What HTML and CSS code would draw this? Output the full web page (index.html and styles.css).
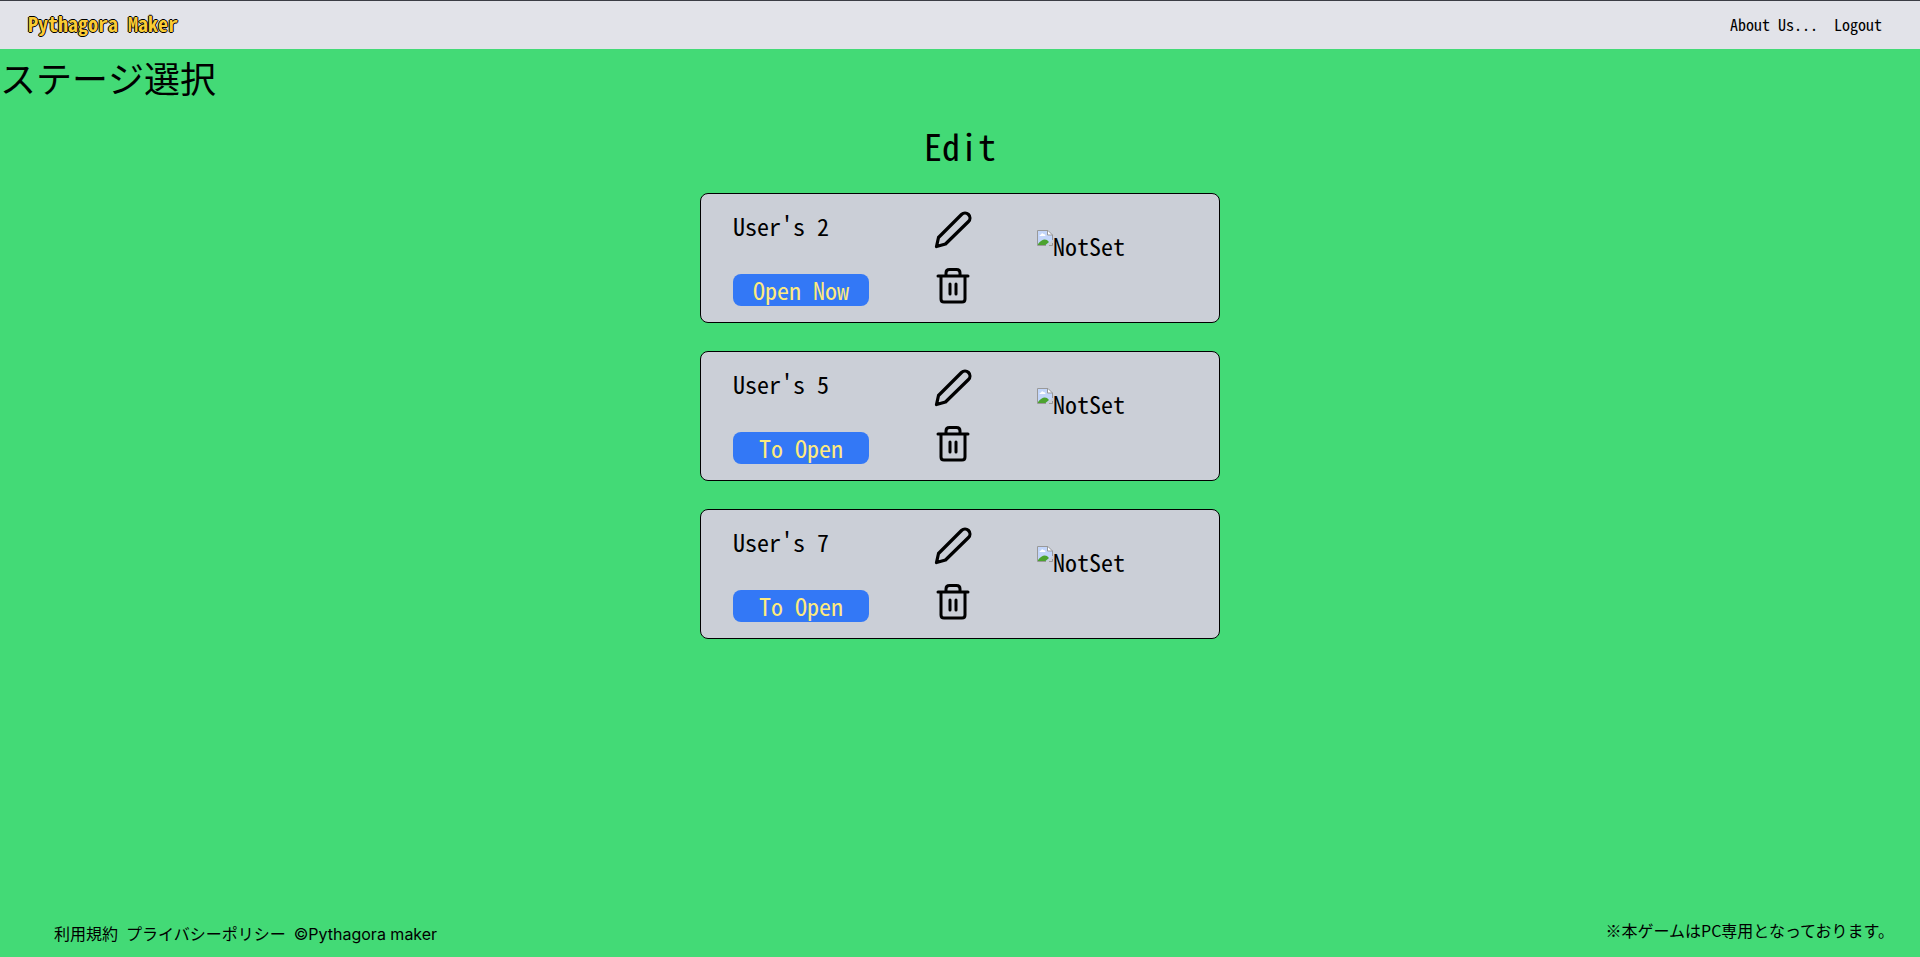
FILE: index.html
```html
<!DOCTYPE html>
<html lang="ja">
<head>
<meta charset="utf-8">
<title>Pythagora Maker</title>
<link rel="stylesheet" href="styles.css">
</head>
<body>
<svg class="sprite" aria-hidden="true">
  <symbol id="pencil" viewBox="0 0 48 48"><path d="M7.500 40.500 L9.500 31.500 L32.500 8.500 A4.900 4.900 0 0 1 39.500 15.500 L16.500 38 Z" fill="none" stroke="currentColor" stroke-width="3.200" stroke-linejoin="round"/></symbol>
  <symbol id="trash" viewBox="0 0 48 48"><path d="M9 14H39M12 14V37Q12 40 15 40H33Q36 40 36 37V14M17 14V11Q17 7.500 20.500 7.500H27.500Q31 7.500 31 11V14M21 22V32M27 22V32" fill="none" stroke="currentColor" stroke-width="3" stroke-linecap="round"/></symbol>
  <symbol id="missing" viewBox="0 0 16 16"><path d="M.5.500H11L15.500 5V10L9 15.500H.5Z" fill="#c3d6fa"/><path d="M1 15.500V14Q5.500 8 10 10L12 12L8 15.500Z" fill="#4ca32f"/><path d="M2.500 6Q2.500 4.500 4 4.500Q5 2.500 6.500 4Q8.500 4 8.500 6Z" fill="#fff"/><path d="M10.500.500V5H15.500Z" fill="#fff"/><path d="M15.500 10V5L11 .5H.5V15.500H9M10.500.500V5H15.500M12 15.500H15.500V13" fill="none" stroke="#999"/></symbol>
</svg>
<header class="topbar">
  <a class="logo" href="#">Pythagora Maker</a>
  <nav class="links"><a href="#">About Us...</a><a href="#">Logout</a></nav>
</header>
<main class="main">
  <h1 class="title">ステージ選択</h1>
  <h2 class="subtitle">Edit</h2>
  <div class="stages">
    <article class="card">
      <div class="info"><h3 class="name">User's 2</h3><button class="toggle">Open Now</button></div>
      <div class="actions"><button class="icon" aria-label="Edit"><svg><use href="#pencil"/></svg></button><button class="icon" aria-label="Delete"><svg><use href="#trash"/></svg></button></div>
      <div class="thumb"><svg><use href="#missing"/></svg><span>NotSet</span></div>
    </article>
    <article class="card">
      <div class="info"><h3 class="name">User's 5</h3><button class="toggle">To Open</button></div>
      <div class="actions"><button class="icon" aria-label="Edit"><svg><use href="#pencil"/></svg></button><button class="icon" aria-label="Delete"><svg><use href="#trash"/></svg></button></div>
      <div class="thumb"><svg><use href="#missing"/></svg><span>NotSet</span></div>
    </article>
    <article class="card">
      <div class="info"><h3 class="name">User's 7</h3><button class="toggle">To Open</button></div>
      <div class="actions"><button class="icon" aria-label="Edit"><svg><use href="#pencil"/></svg></button><button class="icon" aria-label="Delete"><svg><use href="#trash"/></svg></button></div>
      <div class="thumb"><svg><use href="#missing"/></svg><span>NotSet</span></div>
    </article>
  </div>
</main>
<footer class="footer">
  <div class="legal"><a href="#">利用規約</a><a href="#">プライバシーポリシー</a><span>©Pythagora maker</span></div>
  <p class="note">※本ゲームはPC専用となっております。</p>
</footer>
</body>
</html>
```
FILE: styles.css
```css
* { box-sizing: border-box; margin: 0; padding: 0; }
body {
  min-height: 100vh;
  display: flex;
  flex-direction: column;
  background: #43da76;
  color: #000;
  font-family: "Noto Sans Mono CJK JP", "Noto Sans CJK JP", monospace;
}
a { color: inherit; text-decoration: none; }
button { font: inherit; color: inherit; border: 0; background: none; cursor: pointer; }
h1, h2, h3 { font-weight: 400; }
.sprite { display: none; }
.topbar {
  display: flex;
  align-items: center;
  justify-content: space-between;
  height: 49px;
  padding: 0 38px 3px 28px;
  background: #e2e3e9;
  border-top: 1px solid #3b3d45;
}
.logo {
  font-size: 20px;
  font-weight: 700;
  color: #facc35;
  text-shadow: 1px 0 #000, -1px 0 #000, 0 1px #000, 0 -1px #000;
}
.links { display: flex; gap: 16px; font-size: 16px; }
.main { flex: 1; padding-top: 8px; }
.title { font-size: 36px; line-height: 40px; }
.subtitle { font-size: 36px; line-height: 40px; margin-top: 28px; text-align: center; }
.stages { display: flex; flex-direction: column; align-items: center; gap: 28px; margin-top: 28px; }
.card {
  display: grid;
  grid-template-columns: 136px 48px 1fr;
  width: 520px;
  max-width: 100%;
  padding: 12px 32px;
  column-gap: 60px;
  background: #cbcfd7;
  border: 1px solid #000;
  border-radius: 8px;
  font-size: 24px;
  line-height: 32px;
}
.info { display: flex; flex-direction: column; justify-content: space-between; padding: 4px 0; }
.name { font-size: 24px; }
.toggle { background: #3378f6; color: #fdea7e; border-radius: 8px; }
.actions { display: flex; flex-direction: column; gap: 8px; }
.icon, .icon svg { display: block; width: 48px; height: 48px; }
.thumb { display: flex; align-items: flex-start; padding-top: 24px; }
.thumb svg { width: 16px; height: 16px; }
.footer {
  display: flex;
  justify-content: space-between;
  align-items: flex-start;
  padding: 0 26px 11px 54px;
  font-family: Inter, "Noto Sans CJK JP", sans-serif;
  font-size: 16px;
  line-height: 24px;
}
.legal { display: flex; gap: 8px; padding-top: 4px; }
.note { font-family: "Noto Sans CJK JP", sans-serif; }
```
